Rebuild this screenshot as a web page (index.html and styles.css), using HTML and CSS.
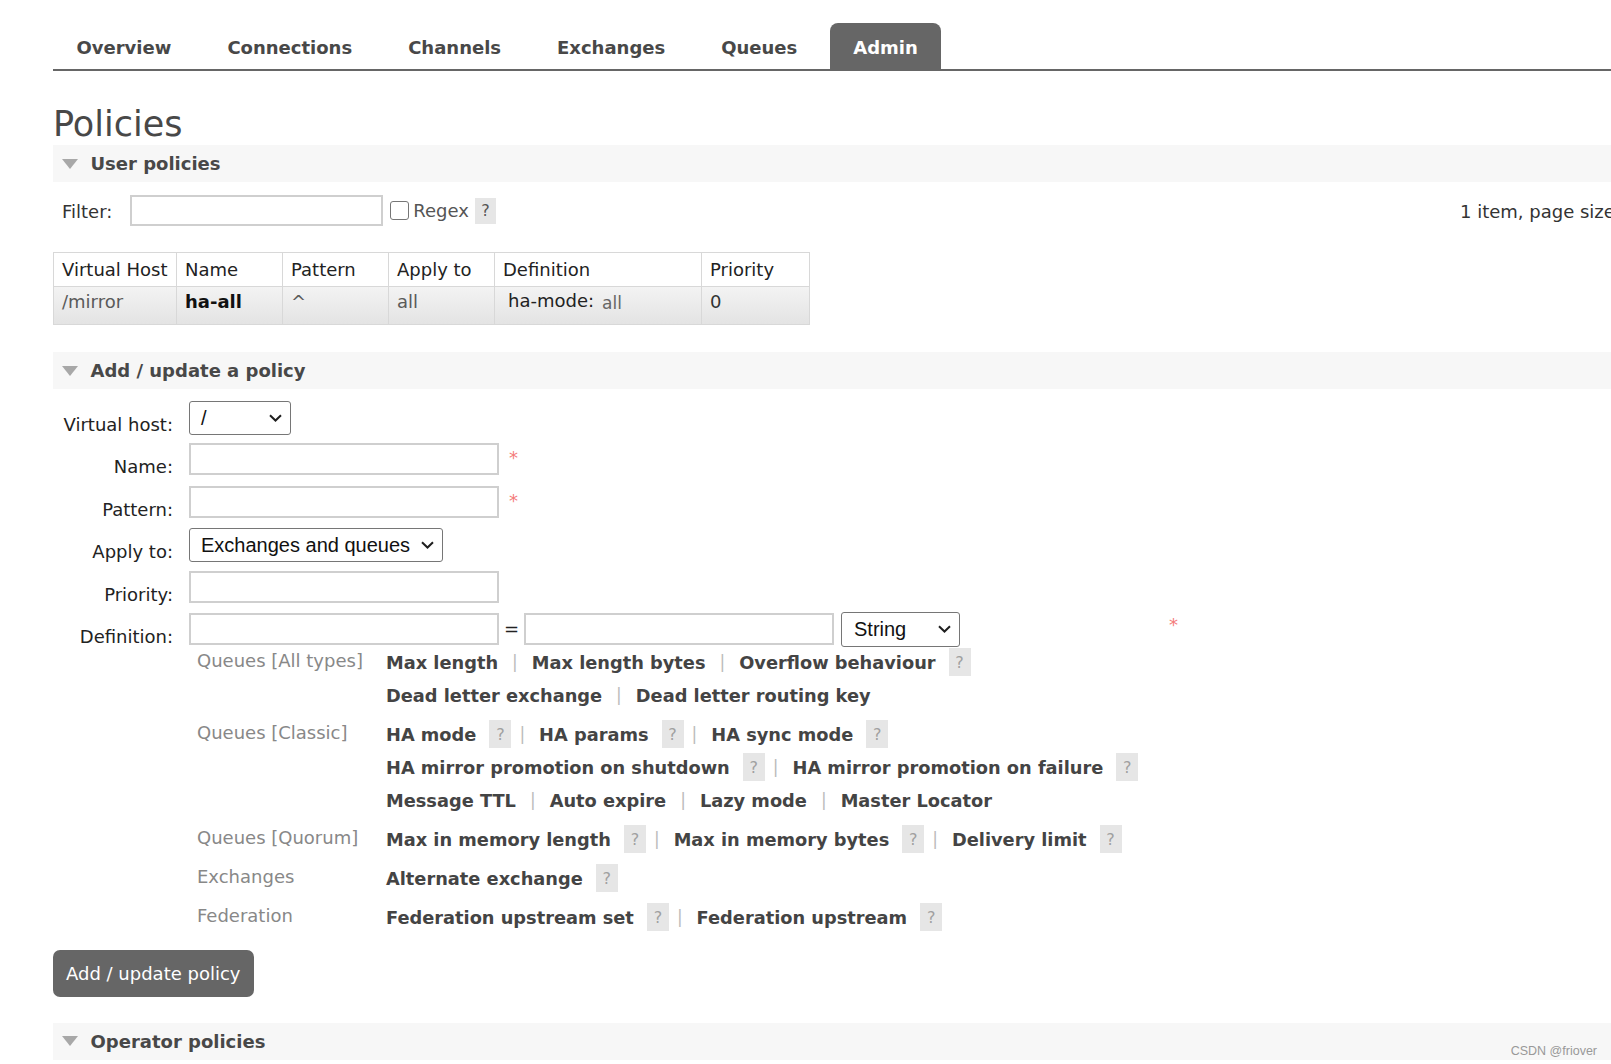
FILE: index.html
```html
<!DOCTYPE html>
<html lang="en">
<head>
<meta charset="utf-8">
<title>RabbitMQ Management - Policies</title>
<link rel="stylesheet" href="styles.css">
</head>
<body>
<div class="page">
  <nav class="menu">
    <ul>
      <li><a>Overview</a></li>
      <li><a>Connections</a></li>
      <li><a>Channels</a></li>
      <li><a>Exchanges</a></li>
      <li><a>Queues</a></li>
      <li class="active"><a>Admin</a></li>
    </ul>
  </nav>

  <h1>Policies</h1>

  <h2 class="section-head"><span class="tri"></span>User policies</h2>
  <div class="filter-row">
    <span class="filter-label">Filter:</span>
    <span class="text-input filter-input"></span>
    <span class="checkbox"></span>
    <span class="regex">Regex</span>
    <span class="help help-dark">?</span>
    <span class="pager">1 item, page size</span>
  </div>

  <table class="list">
    <colgroup>
      <col class="c1"><col class="c2"><col class="c3"><col class="c4"><col class="c5"><col class="c6">
    </colgroup>
    <thead>
      <tr><th>Virtual Host</th><th>Name</th><th>Pattern</th><th>Apply to</th><th>Definition</th><th>Priority</th></tr>
    </thead>
    <tbody>
      <tr>
        <td class="muted">/mirror</td>
        <td class="strong">ha-all</td>
        <td class="muted">^</td>
        <td class="muted">all</td>
        <td class="def"><span class="def-key">ha-mode:</span><span class="def-val">all</span></td>
        <td>0</td>
      </tr>
    </tbody>
  </table>

  <h2 class="section-head add-head"><span class="tri"></span>Add / update a policy</h2>

  <div class="form-grid">
    <label class="flabel">Virtual host:</label>
    <div class="fcontrol">
      <span class="fake-select vhost-select"><span class="sel-text">/</span><svg class="chev" width="13" height="8" viewBox="0 0 13 8"><path d="M1 1.2l5.5 5.3L12 1.2" fill="none" stroke="#1f1f1f" stroke-width="2"/></svg></span>
    </div>

    <label class="flabel">Name:</label>
    <div class="fcontrol"><span class="text-input wide"></span><span class="req">*</span></div>

    <label class="flabel">Pattern:</label>
    <div class="fcontrol"><span class="text-input wide"></span><span class="req">*</span></div>

    <label class="flabel">Apply to:</label>
    <div class="fcontrol">
      <span class="fake-select apply-select"><span class="sel-text">Exchanges and queues</span><svg class="chev" width="13" height="8" viewBox="0 0 13 8"><path d="M1 1.2l5.5 5.3L12 1.2" fill="none" stroke="#1f1f1f" stroke-width="2"/></svg></span>
    </div>

    <label class="flabel">Priority:</label>
    <div class="fcontrol"><span class="text-input wide"></span></div>

    <label class="flabel">Definition:</label>
    <div class="fcontrol">
      <span class="text-input wide"></span>
      <span class="eq">=</span>
      <span class="text-input wide"></span>
      <span class="fake-select type-select"><span class="sel-text">String</span><svg class="chev" width="13" height="8" viewBox="0 0 13 8"><path d="M1 1.2l5.5 5.3L12 1.2" fill="none" stroke="#1f1f1f" stroke-width="2"/></svg></span>
      <span class="req req-far">*</span>
    </div>
  </div>

  <div class="helpers">
    <div class="cat">Queues [All types]</div>
    <div class="links">
      <div class="line"><span class="lk">Max length</span><span class="sep">|</span><span class="lk">Max length bytes</span><span class="sep">|</span><span class="lk">Overflow behaviour</span><span class="help">?</span></div>
      <div class="line"><span class="lk">Dead letter exchange</span><span class="sep">|</span><span class="lk">Dead letter routing key</span></div>
    </div>

    <div class="cat">Queues [Classic]</div>
    <div class="links">
      <div class="line"><span class="lk">HA mode</span><span class="help">?</span><span class="sep sep-after">|</span><span class="lk">HA params</span><span class="help">?</span><span class="sep sep-after">|</span><span class="lk">HA sync mode</span><span class="help">?</span></div>
      <div class="line"><span class="lk">HA mirror promotion on shutdown</span><span class="help">?</span><span class="sep sep-after">|</span><span class="lk">HA mirror promotion on failure</span><span class="help">?</span></div>
      <div class="line"><span class="lk">Message TTL</span><span class="sep">|</span><span class="lk">Auto expire</span><span class="sep">|</span><span class="lk">Lazy mode</span><span class="sep">|</span><span class="lk">Master Locator</span></div>
    </div>

    <div class="cat">Queues [Quorum]</div>
    <div class="links">
      <div class="line"><span class="lk">Max in memory length</span><span class="help">?</span><span class="sep sep-after">|</span><span class="lk">Max in memory bytes</span><span class="help">?</span><span class="sep sep-after">|</span><span class="lk">Delivery limit</span><span class="help">?</span></div>
    </div>

    <div class="cat">Exchanges</div>
    <div class="links">
      <div class="line"><span class="lk">Alternate exchange</span><span class="help">?</span></div>
    </div>

    <div class="cat">Federation</div>
    <div class="links">
      <div class="line"><span class="lk">Federation upstream set</span><span class="help">?</span><span class="sep sep-after">|</span><span class="lk">Federation upstream</span><span class="help">?</span></div>
    </div>
  </div>

  <button class="submit" type="button">Add / update policy</button>

  <h2 class="section-head op-head"><span class="tri"></span>Operator policies</h2>
</div>
<div class="watermark">CSDN @friover</div>
</body>
</html>
```

FILE: styles.css
```css
html, body {
  margin: 0;
  padding: 0;
}

body {
  font-family: "DejaVu Sans", Verdana, sans-serif;
  font-size: 18px;
  color: #484848;
  background: #fff;
  overflow: hidden;
  position: relative;
  height: 1064px;
}

.page {
  padding: 23px 0 0 53px;
}

/* ---------- top menu ---------- */
.menu ul {
  list-style: none;
  margin: 0;
  padding: 0;
  display: flex;
  gap: 9px;
  border-bottom: 2px solid #666;
}

.menu li a {
  display: block;
  padding: 4px 23.5px 0;
  height: 42px;
  line-height: 42px;
  font-weight: bold;
  font-size: 18px;
  color: #484848;
  border-radius: 8px 8px 0 0;
}

.menu li.active a {
  background: #666;
  color: #fff;
}

/* ---------- headings ---------- */
h1 {
  margin: 31px 0 -1px;
  font-size: 35px;
  line-height: 44px;
  font-weight: normal;
  color: #484848;
}

.section-head {
  margin: 0;
  height: 37px;
  display: flex;
  align-items: center;
  padding-left: 9px;
  background: #f7f7f7;
  font-size: 18px;
  font-weight: bold;
  color: #484848;
}

.tri {
  width: 0;
  height: 0;
  border-left: 8.5px solid transparent;
  border-right: 8.5px solid transparent;
  border-top: 10px solid #a8a8a8;
  margin-right: 12.5px;
}

/* ---------- filter row ---------- */
.filter-row {
  margin-top: 13px;
  height: 31px;
  display: flex;
  align-items: center;
  padding-left: 9px;
}

.filter-label {
  color: #333;
  position: relative;
  top: 1px;
}

.text-input {
  display: inline-block;
  box-sizing: border-box;
  height: 32px;
  border: 2px solid #cfcfcf;
  background: #fff;
}

.filter-input {
  width: 253px;
  height: 31px;
  margin-left: 18px;
}

.checkbox {
  width: 19px;
  height: 19px;
  box-sizing: border-box;
  border: 1px solid #767676;
  border-radius: 3px;
  margin-left: 7px;
  background: #fff;
}

.regex {
  margin-left: 4px;
  color: #555;
}

.help {
  display: inline-flex;
  align-items: center;
  justify-content: center;
  width: 22px;
  height: 28px;
  background: #e6e6e6;
  color: #a0a0a0;
  font-size: 16px;
  font-weight: normal;
  margin-left: 13px;
  margin-right: -4px;
}

.help-dark {
  width: 21px;
  height: 26px;
  color: #555;
  margin-left: 6px;
  margin-right: 0;
}

.pager {
  margin-left: auto;
  width: 151px;
  flex: none;
  overflow: hidden;
  white-space: nowrap;
  color: #333;
  position: relative;
  top: 1px;
}

/* ---------- policies table ---------- */
.list {
  margin-top: 26px;
  border-collapse: collapse;
  width: 756px;
  table-layout: fixed;
}

.list .c1 { width: 123px; }
.list .c2 { width: 106px; }
.list .c3 { width: 106px; }
.list .c4 { width: 106px; }
.list .c5 { width: 207px; }
.list .c6 { width: 108px; }

.list th,
.list td {
  border: 1px solid #d8d8d8;
  text-align: left;
  font-weight: normal;
  padding: 0 0 0 8px;
  white-space: nowrap;
  overflow: hidden;
}

.list th {
  height: 33px;
  color: #222;
  background: #fff;
}

.list tbody tr {
  background: linear-gradient(#f3f3f3, #e3e3e3);
}

.list td {
  height: 38px;
  vertical-align: top;
  padding-top: 3px;
  line-height: 24px;
  box-sizing: border-box;
  color: #333;
}

.list td.muted {
  color: #5a5a5a;
}

.list td.strong {
  font-weight: bold;
  color: #111;
}

.list td.def {
  padding-left: 13px;
  padding-top: 2px;
}

.def-key {
  color: #222;
}

.def-val {
  margin-left: 8px;
  font-size: 17px;
  color: #666;
  position: relative;
  top: 2px;
}

/* ---------- add form ---------- */
.add-head {
  margin-top: 27px;
}

.form-grid {
  margin-top: 12px;
  display: grid;
  grid-template-columns: 120px auto;
  column-gap: 16px;
  row-gap: 8.4px;
}

.flabel {
  text-align: right;
  padding-top: 10px;
  line-height: 24px;
  color: #222;
  position: relative;
  top: 2px;
}

.fcontrol {
  display: flex;
  align-items: flex-start;
}

.wide {
  width: 310px;
}

.req {
  color: #f47c7c;
  margin-left: 10px;
  line-height: 24px;
  margin-top: 3px;
}

.req-far {
  margin-left: 209px;
  margin-top: 0;
}

.eq {
  width: 25px;
  text-align: center;
  line-height: 32px;
  color: #222;
}

.fake-select {
  box-sizing: border-box;
  display: inline-flex;
  align-items: center;
  justify-content: space-between;
  height: 34px;
  border: 1px solid #767676;
  border-radius: 3px;
  background: #fff;
  padding: 0 8px 0 11px;
  font-family: "Liberation Sans", Arial, sans-serif;
  font-size: 20px;
  color: #111;
}

.vhost-select {
  width: 102px;
}

.apply-select {
  width: 254px;
}

.type-select {
  width: 119px;
  height: 35px;
  margin-left: 7px;
  margin-top: -1px;
  padding-left: 12px;
}

.chev {
  flex: none;
}

/* ---------- helper links ---------- */
.helpers {
  margin: -1px 0 0 136px;
  display: grid;
  grid-template-columns: 197px auto;
  row-gap: 6px;
}

.cat {
  padding-left: 8px;
  font-size: 18px;
  line-height: 29px;
  color: #888;
}

.line {
  height: 33px;
  display: flex;
  align-items: center;
  white-space: nowrap;
}

.lk {
  font-weight: bold;
  font-size: 17.8px;
  color: #444;
}

.sep {
  color: #bbb;
  margin: 0 14px;
  font-size: 17px;
}

.sep-after {
  margin-left: 12px;
}

/* ---------- button ---------- */
.submit {
  display: block;
  margin-top: 16px;
  width: 201px;
  height: 47px;
  border: none;
  border-radius: 7px;
  background: #666;
  color: #fff;
  font-family: "DejaVu Sans", Verdana, sans-serif;
  font-size: 18px;
  text-align: left;
  padding: 0 0 0 13px;
}

.op-head {
  margin-top: 26px;
}

/* ---------- watermark overlay ---------- */
.watermark {
  position: absolute;
  right: 14px;
  bottom: 6px;
  font-family: "Liberation Sans", Arial, sans-serif;
  font-size: 12.5px;
  color: #999;
}
```
